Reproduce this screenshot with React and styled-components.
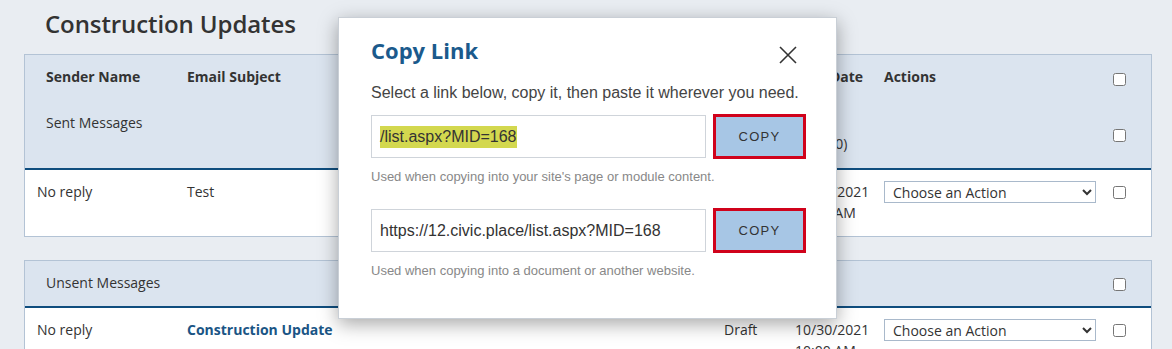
import React from "react";
import styled, { createGlobalStyle } from "styled-components";

const Global = createGlobalStyle`
  html, body { margin: 0; padding: 0; }
  body {
    background: #e9edf2;
    font-family: "Open Sans", "Noto Sans", sans-serif;
    color: #333;
    width: 1172px;
    height: 349px;
    overflow: hidden;
  }
`;

const Page = styled.div`
  position: relative;
  padding: 0 20px 0 24px;
`;

const Title = styled.h1`
  margin: 0;
  padding: 8px 0 0 21px;
  height: 54px;
  box-sizing: border-box;
  font-size: 24px;
  line-height: 32px;
  font-weight: 600;
  color: #333;
  letter-spacing: -0.1px;
`;

const Table = styled.div`
  width: 1128px;
  box-sizing: border-box;
  border: 1px solid #b3c3d5;
  background: #fff;
  margin-bottom: 23px;
`;

const Head = styled.div`
  background: #dbe4ef;
  border-bottom: 2px solid #0f4d7e;
`;

const Row = styled.div`
  display: grid;
  grid-template-columns: 150px 537px 71px 89px 228px 1fr;
  padding: ${(p) => p.$pad || "12px 0 12px"};
  box-sizing: border-box;
  height: ${(p) => p.$h}px;
  font-size: 14px;
  line-height: 21px;
`;

const Cell = styled.div`
  padding-left: ${(p) => (p.$first ? 21 : 12)}px;
  font-weight: ${(p) => (p.$bold ? 700 : 400)};
  color: ${(p) => (p.$link ? "#1a5585" : "#333")};
  white-space: nowrap;
`;

const CheckCell = styled.div`
  padding-left: 13px;
  padding-top: ${(p) => p.$top || 0}px;
`;

const Check = styled.input.attrs({ type: "checkbox" })`
  margin: 0;
  width: 13px;
  height: 13px;
  display: block;
`;

const Select = styled.select`
  width: 212px;
  height: 22px;
  border: 1px solid #a9b9cb;
  border-radius: 0;
  background: #fff;
  font-family: "Open Sans", sans-serif;
  font-size: 14px;
  color: #333;
  padding: 0 4px;
  margin-top: 0;
`;

const Modal = styled.div`
  position: absolute;
  left: 338px;
  top: 17px;
  width: 499px;
  height: 302px;
  box-sizing: border-box;
  background: #fff;
  border: 1px solid #c9cfd6;
  box-shadow: 0 5px 18px rgba(0, 0, 0, 0.35);
  padding: 19px 30px 0 32px;
  font-family: "Liberation Sans", Arial, sans-serif;
`;

const ModalHead = styled.div`
  display: flex;
  justify-content: space-between;
  align-items: flex-start;
  height: 26px;
`;

const ModalTitle = styled.h2`
  margin: 0;
  font-family: "Open Sans", sans-serif;
  font-size: 22px;
  line-height: 26px;
  font-weight: 700;
  color: #1b5a8c;
`;

const Close = styled.button`
  border: 0;
  background: none;
  padding: 0;
  margin: 9px 9px 0 0;
  width: 18px;
  height: 18px;
  display: flex;
`;

const Lead = styled.p`
  margin: 19px 0 10px;
  font-size: 16px;
  line-height: 22px;
  color: #444;
`;

const LinkRow = styled.div`
  display: flex;
  align-items: center;
  gap: 7px;
  margin-top: ${(p) => p.$mt || 0}px;
`;

const LinkBox = styled.div`
  flex: none;
  width: 335px;
  height: 43px;
  box-sizing: border-box;
  border: 1px solid #cfd4da;
  padding: 0 8px;
  display: flex;
  align-items: center;
  font-size: 16px;
  color: #333;
  white-space: nowrap;
  overflow: hidden;
`;

const Selected = styled.span`
  background: #d3d84f;
  line-height: 22px;
`;

const CopyBtn = styled.button`
  flex: none;
  width: 93px;
  height: 45px;
  box-sizing: border-box;
  border: 3px solid #d0021b;
  background: #a7c6e5;
  font-family: "Liberation Sans", Arial, sans-serif;
  font-size: 13px;
  letter-spacing: 1.3px;
  color: #333;
  padding: 0;
`;

const Help = styled.p`
  margin: 9px 0 0;
  font-size: 13px;
  line-height: 18px;
  color: #888;
`;

const X = () => (
  <svg width="18" height="18" viewBox="0 0 18 18">
    <path d="M1 1L17 17M17 1L1 17" stroke="#333" strokeWidth="1.6" fill="none" />
  </svg>
);

export default function App() {
  return (
    <>
      <Global />
      <Page>
        <Title>Construction Updates</Title>
        <Table>
          <Head>
            <Row $h={45} $pad="11px 0 0">
              <Cell $first $bold>Sender Name</Cell>
              <Cell $bold>Email Subject</Cell>
              <Cell $bold>Status</Cell>
              <Cell $bold>Sent Date</Cell>
              <Cell $bold>Actions</Cell>
              <CheckCell $top={7}><Check /></CheckCell>
            </Row>
            <Row $h={68} $pad="12px 0 0">
              <Cell $first>Sent Messages</Cell>
              <Cell />
              <Cell />
              <Cell>Total<br />Total (0)</Cell>
              <Cell />
              <CheckCell $top={17}><Check /></CheckCell>
            </Row>
          </Head>
          <Row $h={66} $pad="11px 0 0">
            <Cell>No reply</Cell>
            <Cell>Test</Cell>
            <Cell>Sent</Cell>
            <Cell>10/30/2021<br />10:00 AM</Cell>
            <Cell><Select defaultValue="a"><option value="a">Choose an Action</option></Select></Cell>
            <CheckCell $top={5}><Check /></CheckCell>
          </Row>
        </Table>
        <Table>
          <Head>
            <Row $h={45} $pad="11px 0 0">
              <Cell $first>Unsent Messages</Cell>
              <Cell />
              <Cell />
              <Cell />
              <Cell />
              <CheckCell $top={6}><Check /></CheckCell>
            </Row>
          </Head>
          <Row $h={66} $pad="11px 0 0">
            <Cell>No reply</Cell>
            <Cell $bold $link>Construction Update</Cell>
            <Cell>Draft</Cell>
            <Cell>10/30/2021<br />10:00 AM</Cell>
            <Cell><Select defaultValue="a"><option value="a">Choose an Action</option></Select></Cell>
            <CheckCell $top={5}><Check /></CheckCell>
          </Row>
        </Table>
        <Modal>
          <ModalHead>
            <ModalTitle>Copy Link</ModalTitle>
            <Close aria-label="Close"><X /></Close>
          </ModalHead>
          <Lead>Select a link below, copy it, then paste it wherever you need.</Lead>
          <LinkRow>
            <LinkBox><Selected>/list.aspx?MID=168</Selected></LinkBox>
            <CopyBtn>COPY</CopyBtn>
          </LinkRow>
          <Help>Used when copying into your site's page or module content.</Help>
          <LinkRow $mt={22}>
            <LinkBox>https://12.civic.place/list.aspx?MID=168</LinkBox>
            <CopyBtn>COPY</CopyBtn>
          </LinkRow>
          <Help>Used when copying into a document or another website.</Help>
        </Modal>
      </Page>
    </>
  );
}
